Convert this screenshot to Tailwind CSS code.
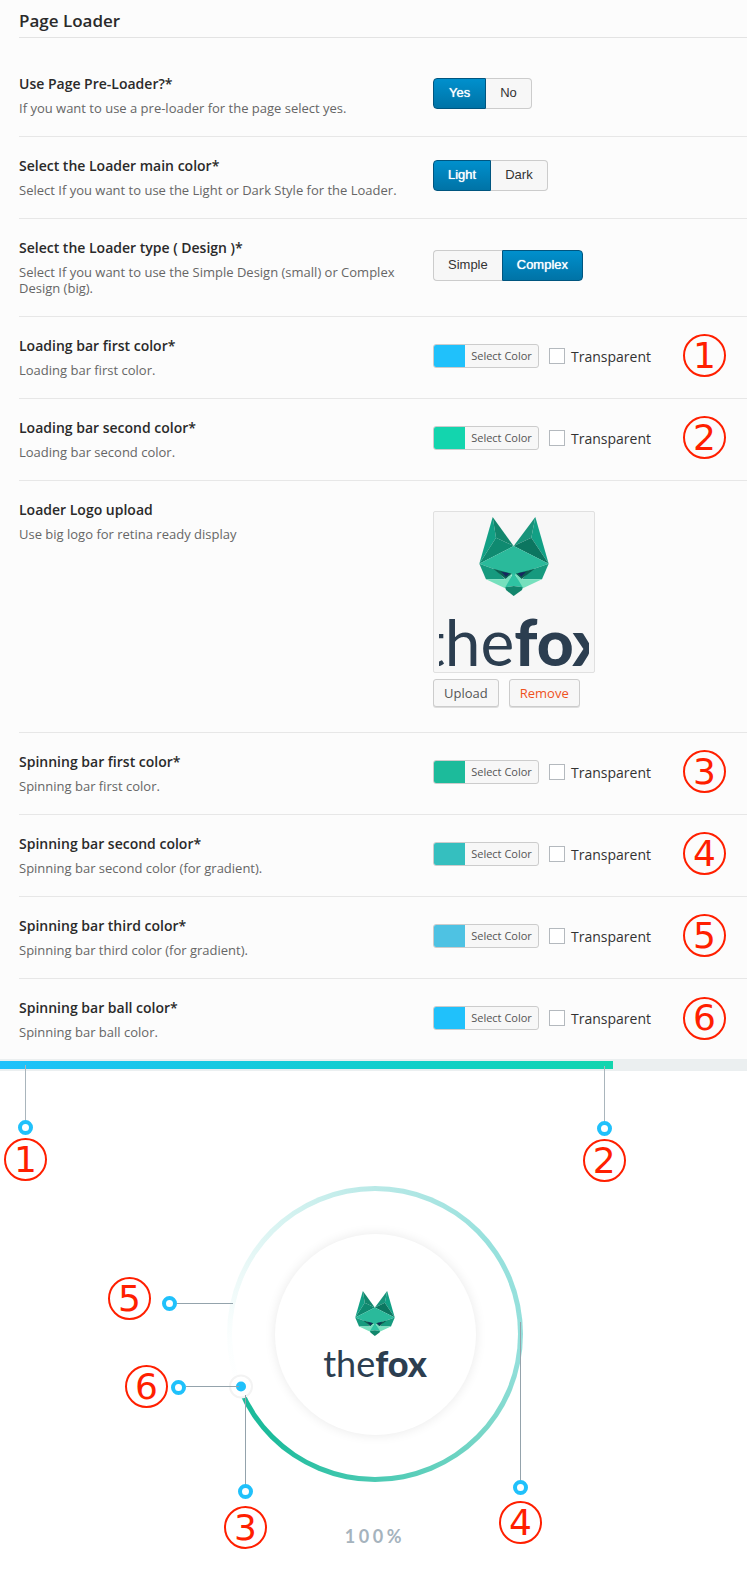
<!DOCTYPE html>
<html lang="en">
<head>
<meta charset="utf-8">
<meta name="viewport" content="width=device-width, initial-scale=1">
<title>Page Loader</title>
<script src="https://cdn.jsdelivr.net/npm/@tailwindcss/browser@4"></script>
</head>
<body class="bg-white font-['Open_Sans',sans-serif] text-[#2a2a2a]">

<svg class="hidden" aria-hidden="true">
  <symbol id="fox" viewBox="0 0 208 237">
    <polygon fill="#12a085" points="40,0 0,140 50,62"/>
    <polygon fill="#12866c" points="40,0 50,62 103,87"/>
    <polygon fill="#0f8a70" points="50,62 103,87 0,140"/>
    <polygon fill="#12a085" points="168,0 208,140 156,62"/>
    <polygon fill="#18937a" points="168,0 156,62 103,87"/>
    <polygon fill="#0c7660" points="156,62 103,87 208,140"/>
    <polygon fill="#2aba9b" points="0,140 103,87 208,140 156,158 103,175 50,158"/>
    <polygon fill="#169a7e" points="0,140 50,158 78,187 20,187"/>
    <polygon fill="#169a7e" points="208,140 156,158 128,187 188,187"/>
    <polygon fill="#0a5f50" points="42,155 98,170 80,187"/>
    <polygon fill="#0a5f50" points="166,155 108,170 126,187"/>
    <polygon fill="#17255f" points="66,164 90,169 80,179"/>
    <polygon fill="#17255f" points="140,164 116,169 126,179"/>
    <polygon fill="#76e0bd" points="20,187 78,187 99,168 82,216"/>
    <polygon fill="#76e0bd" points="188,187 128,187 107,168 126,216"/>
    <polygon fill="#2fc3a2" points="103,166 78,211 103,207 130,211"/>
    <polygon fill="#12866c" points="78,211 103,207 130,211 128,219 103,237 80,219"/>
  </symbol>
</svg>

<main>
  <section class="bg-[#fcfcfc] pl-[19px]">
    <h1 class="border-b border-[#e3e3e3] pt-[9px] pb-1 text-[17px] leading-6 font-semibold">Page Loader</h1>

    <div class="pt-[17px]">
      <div class="grid grid-cols-[414fr_314fr] border-b border-[#e7e7e7]">
        <div class="pt-[19px] pr-4 pb-5">
          <h2 class="text-[14px] leading-5 font-semibold">Use Page Pre-Loader?*</h2>
          <p class="mt-[6px] text-[13px] leading-4 text-[#666]">If you want to use a pre-loader for the page select yes.</p>
        </div>
        <div class="flex items-center pb-1" role="group" aria-label="Use Page Pre-Loader">
          <button type="button" aria-pressed="true" class="h-[31px] rounded-l border border-[#00557f] bg-linear-to-b from-[#0090cd] to-[#0073a6] px-[15px] pb-[2px] font-['Liberation_Sans',sans-serif] text-[13px] text-white text-shadow-[0_0_1px_#fff]">Yes</button>
          <button type="button" aria-pressed="false" class="h-[31px] rounded-r border border-l-0 border-[#ccc] bg-[#f7f7f7] px-[14px] pb-[2px] font-['Liberation_Sans',sans-serif] text-[13px] text-[#333]">No</button>
        </div>
      </div>
    </div>

    <div class="grid grid-cols-[414fr_314fr] border-b border-[#e7e7e7]">
      <div class="pt-[19px] pr-4 pb-5">
        <h2 class="text-[14px] leading-5 font-semibold">Select the Loader main color*</h2>
        <p class="mt-[6px] text-[13px] leading-4 text-[#666]">Select If you want to use the Light or Dark Style for the Loader.</p>
      </div>
      <div class="flex items-center pb-1" role="group" aria-label="Loader main color">
        <button type="button" aria-pressed="true" class="h-[31px] rounded-l border border-[#00557f] bg-linear-to-b from-[#0090cd] to-[#0073a6] px-[14px] pb-[2px] font-['Liberation_Sans',sans-serif] text-[13px] text-white text-shadow-[0_0_1px_#fff]">Light</button>
        <button type="button" aria-pressed="false" class="h-[31px] rounded-r border border-l-0 border-[#ccc] bg-[#f7f7f7] px-[14px] pb-[2px] font-['Liberation_Sans',sans-serif] text-[13px] text-[#333]">Dark</button>
      </div>
    </div>

    <div class="grid grid-cols-[414fr_314fr] border-b border-[#e7e7e7]">
      <div class="pt-[19px] pr-4 pb-5">
        <h2 class="text-[14px] leading-5 font-semibold">Select the Loader type ( Design )*</h2>
        <p class="mt-[6px] text-[13px] leading-4 text-[#666]">Select If you want to use the Simple Design (small) or Complex Design (big).</p>
      </div>
      <div class="flex items-center pb-1" role="group" aria-label="Loader type">
        <button type="button" aria-pressed="false" class="h-[31px] rounded-l border border-r-0 border-[#ccc] bg-[#f7f7f7] px-[14px] pb-[2px] font-['Liberation_Sans',sans-serif] text-[13px] text-[#333]">Simple</button>
        <button type="button" aria-pressed="true" class="h-[31px] rounded-r border border-[#00557f] bg-linear-to-b from-[#0090cd] to-[#0073a6] px-[14px] pb-[2px] font-['Liberation_Sans',sans-serif] text-[13px] text-white text-shadow-[0_0_1px_#fff]">Complex</button>
      </div>
    </div>

    <div class="grid grid-cols-[414fr_314fr] border-b border-[#e7e7e7]">
      <div class="pt-[19px] pr-4 pb-5">
        <h2 class="text-[14px] leading-5 font-semibold">Loading bar first color*</h2>
        <p class="mt-[6px] text-[13px] leading-4 text-[#666]">Loading bar first color.</p>
      </div>
      <div class="flex items-center pb-1">
        <button type="button" class="flex h-6 w-[106px] overflow-hidden rounded-[3px] border border-[#ccc] bg-[#f7f7f7] text-[11px] leading-[22px] text-[#555]"><span class="h-full w-[31px] bg-[#20c1fb]"></span><span class="flex-1 text-center">Select Color</span></button>
        <input id="t1" type="checkbox" class="ml-[10px] size-4 appearance-none border border-[#b4b9be] bg-white checked:bg-[#1e8cbe]">
        <label for="t1" class="ml-[6px] pt-[2px] text-[14px] leading-5 text-[#333]">Transparent</label>
        <span class="ml-8 flex size-[43px] items-center justify-center rounded-full border-2 border-[#ff1f00] font-['DejaVu_Sans',sans-serif] text-[36px] leading-none text-[#ff1f00]">1</span>
      </div>
    </div>

    <div class="grid grid-cols-[414fr_314fr] border-b border-[#e7e7e7]">
      <div class="pt-[19px] pr-4 pb-5">
        <h2 class="text-[14px] leading-5 font-semibold">Loading bar second color*</h2>
        <p class="mt-[6px] text-[13px] leading-4 text-[#666]">Loading bar second color.</p>
      </div>
      <div class="flex items-center pb-1">
        <button type="button" class="flex h-6 w-[106px] overflow-hidden rounded-[3px] border border-[#ccc] bg-[#f7f7f7] text-[11px] leading-[22px] text-[#555]"><span class="h-full w-[31px] bg-[#13d5ae]"></span><span class="flex-1 text-center">Select Color</span></button>
        <input id="t2" type="checkbox" class="ml-[10px] size-4 appearance-none border border-[#b4b9be] bg-white checked:bg-[#1e8cbe]">
        <label for="t2" class="ml-[6px] pt-[2px] text-[14px] leading-5 text-[#333]">Transparent</label>
        <span class="ml-8 flex size-[43px] items-center justify-center rounded-full border-2 border-[#ff1f00] font-['DejaVu_Sans',sans-serif] text-[36px] leading-none text-[#ff1f00]">2</span>
      </div>
    </div>

    <div class="grid grid-cols-[414fr_314fr] border-b border-[#e7e7e7]">
      <div class="pt-[19px] pr-4 pb-5">
        <h2 class="text-[14px] leading-5 font-semibold">Loader Logo upload</h2>
        <p class="mt-[6px] text-[13px] leading-4 text-[#666]">Use big logo for retina ready display</p>
      </div>
      <div class="pt-[30px] pb-[25px]">
        <div class="size-[162px] rounded-[2px] border border-[#e0e0e0] bg-[#f7f7f7] p-[5px]">
          <div class="flex h-[150px] flex-col items-center overflow-hidden">
            <svg class="h-[79px] w-[70px] shrink-0" role="img" aria-label="Fox"><use href="#fox"/></svg>
            <div class="mt-[14px] font-['Lato',sans-serif] text-[64px] leading-[64px] whitespace-nowrap text-[#2c3e50]">the<span class="font-black">fox</span></div>
          </div>
        </div>
        <div class="mt-[6px] flex gap-[10px]">
          <button type="button" class="h-7 rounded-[3px] border border-[#ccc] bg-[#f7f7f7] px-[10px] text-[13px] leading-[26px] text-[#555] shadow-[0_1px_0_#ddd]">Upload</button>
          <button type="button" class="h-7 rounded-[3px] border border-[#ccc] bg-[#f7f7f7] px-[10px] text-[13px] leading-[26px] text-[#ef521d] shadow-[0_1px_0_#ddd]">Remove</button>
        </div>
      </div>
    </div>

    <div class="grid grid-cols-[414fr_314fr] border-b border-[#e7e7e7]">
      <div class="pt-[19px] pr-4 pb-5">
        <h2 class="text-[14px] leading-5 font-semibold">Spinning bar first color*</h2>
        <p class="mt-[6px] text-[13px] leading-4 text-[#666]">Spinning bar first color.</p>
      </div>
      <div class="flex items-center pb-1">
        <button type="button" class="flex h-6 w-[106px] overflow-hidden rounded-[3px] border border-[#ccc] bg-[#f7f7f7] text-[11px] leading-[22px] text-[#555]"><span class="h-full w-[31px] bg-[#1cbb9b]"></span><span class="flex-1 text-center">Select Color</span></button>
        <input id="t3" type="checkbox" class="ml-[10px] size-4 appearance-none border border-[#b4b9be] bg-white checked:bg-[#1e8cbe]">
        <label for="t3" class="ml-[6px] pt-[2px] text-[14px] leading-5 text-[#333]">Transparent</label>
        <span class="ml-8 flex size-[43px] items-center justify-center rounded-full border-2 border-[#ff1f00] font-['DejaVu_Sans',sans-serif] text-[36px] leading-none text-[#ff1f00]">3</span>
      </div>
    </div>

    <div class="grid grid-cols-[414fr_314fr] border-b border-[#e7e7e7]">
      <div class="pt-[19px] pr-4 pb-5">
        <h2 class="text-[14px] leading-5 font-semibold">Spinning bar second color*</h2>
        <p class="mt-[6px] text-[13px] leading-4 text-[#666]">Spinning bar second color (for gradient).</p>
      </div>
      <div class="flex items-center pb-1">
        <button type="button" class="flex h-6 w-[106px] overflow-hidden rounded-[3px] border border-[#ccc] bg-[#f7f7f7] text-[11px] leading-[22px] text-[#555]"><span class="h-full w-[31px] bg-[#35bfbf]"></span><span class="flex-1 text-center">Select Color</span></button>
        <input id="t4" type="checkbox" class="ml-[10px] size-4 appearance-none border border-[#b4b9be] bg-white checked:bg-[#1e8cbe]">
        <label for="t4" class="ml-[6px] pt-[2px] text-[14px] leading-5 text-[#333]">Transparent</label>
        <span class="ml-8 flex size-[43px] items-center justify-center rounded-full border-2 border-[#ff1f00] font-['DejaVu_Sans',sans-serif] text-[36px] leading-none text-[#ff1f00]">4</span>
      </div>
    </div>

    <div class="grid grid-cols-[414fr_314fr] border-b border-[#e7e7e7]">
      <div class="pt-[19px] pr-4 pb-5">
        <h2 class="text-[14px] leading-5 font-semibold">Spinning bar third color*</h2>
        <p class="mt-[6px] text-[13px] leading-4 text-[#666]">Spinning bar third color (for gradient).</p>
      </div>
      <div class="flex items-center pb-1">
        <button type="button" class="flex h-6 w-[106px] overflow-hidden rounded-[3px] border border-[#ccc] bg-[#f7f7f7] text-[11px] leading-[22px] text-[#555]"><span class="h-full w-[31px] bg-[#4ec2e3]"></span><span class="flex-1 text-center">Select Color</span></button>
        <input id="t5" type="checkbox" class="ml-[10px] size-4 appearance-none border border-[#b4b9be] bg-white checked:bg-[#1e8cbe]">
        <label for="t5" class="ml-[6px] pt-[2px] text-[14px] leading-5 text-[#333]">Transparent</label>
        <span class="ml-8 flex size-[43px] items-center justify-center rounded-full border-2 border-[#ff1f00] font-['DejaVu_Sans',sans-serif] text-[36px] leading-none text-[#ff1f00]">5</span>
      </div>
    </div>

    <div class="grid grid-cols-[414fr_314fr]">
      <div class="pt-[19px] pr-4 pb-[19px]">
        <h2 class="text-[14px] leading-5 font-semibold">Spinning bar ball color*</h2>
        <p class="mt-[6px] text-[13px] leading-4 text-[#666]">Spinning bar ball color.</p>
      </div>
      <div class="flex items-center pb-[2px]">
        <button type="button" class="flex h-6 w-[106px] overflow-hidden rounded-[3px] border border-[#ccc] bg-[#f7f7f7] text-[11px] leading-[22px] text-[#555]"><span class="h-full w-[31px] bg-[#20c1fb]"></span><span class="flex-1 text-center">Select Color</span></button>
        <input id="t6" type="checkbox" class="ml-[10px] size-4 appearance-none border border-[#b4b9be] bg-white checked:bg-[#1e8cbe]">
        <label for="t6" class="ml-[6px] pt-[2px] text-[14px] leading-5 text-[#333]">Transparent</label>
        <span class="ml-8 flex size-[43px] items-center justify-center rounded-full border-2 border-[#ff1f00] font-['DejaVu_Sans',sans-serif] text-[36px] leading-none text-[#ff1f00]">6</span>
      </div>
    </div>
  </section>

  <section class="relative pb-[37px]" aria-label="Loader preview">
    <div class="bg-[#ebeff0] py-[2px]">
      <div class="h-2 w-[82%] bg-linear-to-r from-[#20c1fb] to-[#13d5ae]"></div>
    </div>

    <!-- callouts hanging from the loading bar -->
    <div class="absolute top-[6px] left-1 flex flex-col items-center">
      <span class="h-[55px] w-px bg-[#a9b5bc]"></span>
      <span class="size-[15px] rounded-full border-4 border-[#20c1fb]"></span>
      <span class="mt-[3px] flex size-[43px] items-center justify-center rounded-full border-2 border-[#ff1f00] font-['DejaVu_Sans',sans-serif] text-[36px] leading-none text-[#ff1f00]">1</span>
    </div>
    <div class="absolute top-[7px] left-[78%] flex flex-col items-center">
      <span class="h-[55px] w-px bg-[#a9b5bc]"></span>
      <span class="size-[15px] rounded-full border-4 border-[#20c1fb]"></span>
      <span class="mt-[3px] flex size-[43px] items-center justify-center rounded-full border-2 border-[#ff1f00] font-['DejaVu_Sans',sans-serif] text-[36px] leading-none text-[#ff1f00]">2</span>
    </div>

    <!-- spinner -->
    <div class="pt-[115px] pl-[3px]">
      <div class="relative mx-auto flex size-[296px] items-center justify-center rounded-full bg-[conic-gradient(#b9e9e7_0deg,#98e1dd_50deg,#93dfdb_100deg,#7bd7c9_130deg,#4bcab3_180deg,#1cbb9b_225deg,#1cbb9b_248deg,#ffffff_248deg,#fbfefe_268deg,#ecf9f8_295deg,#d3f2f0_325deg,#b9e9e7_360deg)] p-[5px]">
        <div class="flex size-full items-center justify-center rounded-full bg-white">
          <div class="flex size-[201px] flex-col items-center justify-center rounded-full bg-white pt-1 shadow-[0_0_12px_rgba(0,0,0,0.09)]">
            <svg class="h-[45px] w-[40px]" role="img" aria-label="Fox"><use href="#fox"/></svg>
            <div class="mt-[9px] font-['Lato',sans-serif] text-[36px] leading-9 text-[#2c3e50]">the<span class="font-black">fox</span></div>
          </div>
        </div>
        <svg class="absolute top-0 left-0 overflow-visible" width="296" height="296" fill="none" aria-hidden="true">
          <circle cx="14" cy="200.500" r="11" fill="#fff" stroke="#f3f3f3" stroke-width="2"/>
          <circle cx="14" cy="200.500" r="5" fill="#20c1fb"/>
          <path stroke="#94a3ac" d="M-50 117.500H6M-41 200.500H12M18.500 209V299M293.500 136V294"/>
          <g stroke="#20c1fb" stroke-width="4" fill="#fff">
            <circle cx="-57.500" cy="117.500" r="5.500"/>
            <circle cx="-48.500" cy="201.500" r="5.500"/>
            <circle cx="18.500" cy="305.500" r="5.500"/>
            <circle cx="293.500" cy="301.500" r="5.500"/>
          </g>
        </svg>
        <span class="absolute top-[91px] left-[-119px] flex size-[43px] items-center justify-center rounded-full border-2 border-[#ff1f00] font-['DejaVu_Sans',sans-serif] text-[36px] leading-none text-[#ff1f00]">5</span>
        <span class="absolute top-[179px] left-[-102px] flex size-[43px] items-center justify-center rounded-full border-2 border-[#ff1f00] font-['DejaVu_Sans',sans-serif] text-[36px] leading-none text-[#ff1f00]">6</span>
        <span class="absolute top-[320px] left-[-3px] flex size-[43px] items-center justify-center rounded-full border-2 border-[#ff1f00] font-['DejaVu_Sans',sans-serif] text-[36px] leading-none text-[#ff1f00]">3</span>
        <span class="absolute top-[315px] left-[272px] flex size-[43px] items-center justify-center rounded-full border-2 border-[#ff1f00] font-['DejaVu_Sans',sans-serif] text-[36px] leading-none text-[#ff1f00]">4</span>
      </div>
      <p class="mt-[42px] text-center font-['Lato',sans-serif] text-[18px] leading-6 font-bold tracking-[0.2em] text-[#a5b3bd]">100%</p>
    </div>
  </section>
</main>
</body>
</html>
